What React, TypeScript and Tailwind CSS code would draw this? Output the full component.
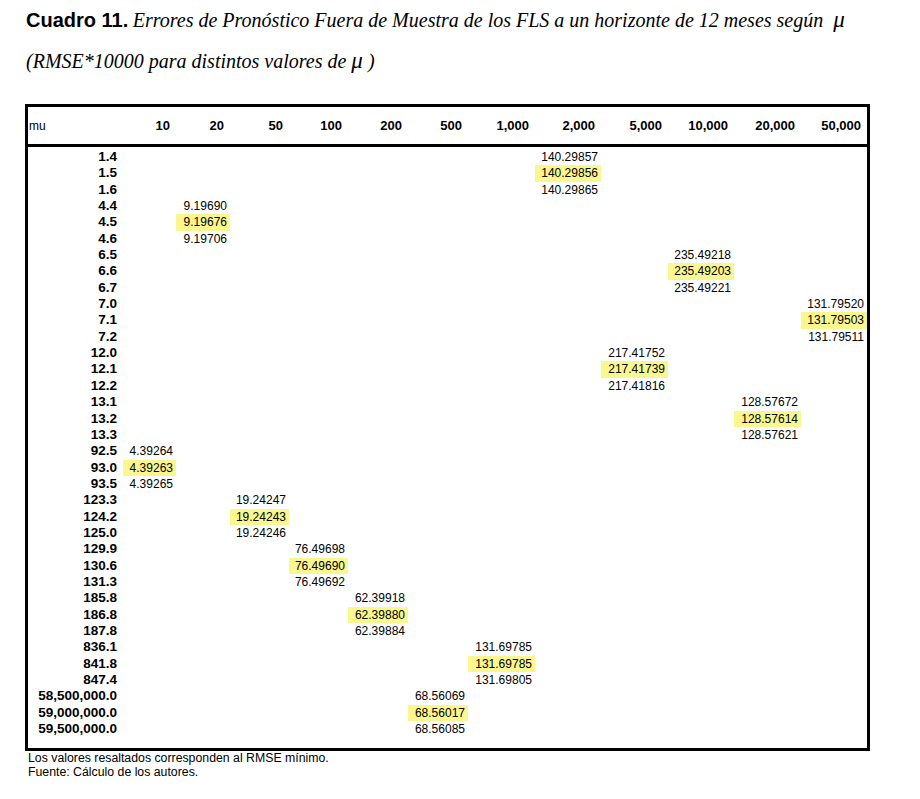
const cols = ["10", "20", "50", "100", "200", "500", "1,000", "2,000", "5,000", "10,000", "20,000", "50,000"];

// each group: three mu values, the column they fall in, and their RMSE; the middle one is the minimum
const groups: { mu: string[]; col: number; vals: string[] }[] = [
  { mu: ["1.4", "1.5", "1.6"], col: 7, vals: ["140.29857", "140.29856", "140.29865"] },
  { mu: ["4.4", "4.5", "4.6"], col: 1, vals: ["9.19690", "9.19676", "9.19706"] },
  { mu: ["6.5", "6.6", "6.7"], col: 9, vals: ["235.49218", "235.49203", "235.49221"] },
  { mu: ["7.0", "7.1", "7.2"], col: 11, vals: ["131.79520", "131.79503", "131.79511"] },
  { mu: ["12.0", "12.1", "12.2"], col: 8, vals: ["217.41752", "217.41739", "217.41816"] },
  { mu: ["13.1", "13.2", "13.3"], col: 10, vals: ["128.57672", "128.57614", "128.57621"] },
  { mu: ["92.5", "93.0", "93.5"], col: 0, vals: ["4.39264", "4.39263", "4.39265"] },
  { mu: ["123.3", "124.2", "125.0"], col: 2, vals: ["19.24247", "19.24243", "19.24246"] },
  { mu: ["129.9", "130.6", "131.3"], col: 3, vals: ["76.49698", "76.49690", "76.49692"] },
  { mu: ["185.8", "186.8", "187.8"], col: 4, vals: ["62.39918", "62.39880", "62.39884"] },
  { mu: ["836.1", "841.8", "847.4"], col: 6, vals: ["131.69785", "131.69785", "131.69805"] },
  { mu: ["58,500,000.0", "59,000,000.0", "59,500,000.0"], col: 5, vals: ["68.56069", "68.56017", "68.56085"] },
];

const rows = groups.flatMap((g) =>
  g.mu.map((m, i) => ({ mu: m, col: g.col, val: g.vals[i], min: i === 1 }))
);

const grid = "grid grid-cols-[95px_53px_54px_59px_59px_60px_60px_67px_66px_67px_66px_67px_66px]";

export default function App() {
  return (
    <div className="w-[920px] h-[799px] bg-white text-black font-['Liberation_Sans',Arial,sans-serif]">
      {/* Title */}
      <div className="pl-[26px] pt-[7px]">
        <p className="leading-[26px] whitespace-nowrap">
          <span className="font-bold text-[20px]">Cuadro 11.</span>{" "}
          <span className="font-['Liberation_Serif',serif] italic text-[20px]">
            Errores de Pronóstico Fuera de Muestra de los FLS a un horizonte de 12 meses según
          </span>
          <span className="font-['Liberation_Serif',serif] italic text-[23px] ml-[10px]">μ</span>
        </p>
        <p className="mt-[13px] leading-[26px] whitespace-nowrap font-['Liberation_Serif',serif] italic text-[20px]">
          (RMSE*10000 para distintos valores de <span className="text-[23px]">μ</span> )
        </p>
      </div>

      {/* Table */}
      <div className="ml-[25px] mt-[30px] w-[845px] border-[3px] border-black">
        <div className={`${grid} h-[40px] items-center border-b-[3px] border-black`}>
          <div className="text-[12px] pl-[1px]">mu</div>
          {cols.map((c) => (
            <div key={c} className="text-right pr-[6px] font-bold text-[13px]">
              {c}
            </div>
          ))}
        </div>
        <div className="pt-[2px] pb-[11px]">
          {rows.map((r) => (
            <div key={r.mu} className={`${grid} h-[16.35px] leading-[16.35px]`}>
              <div className="text-right pr-[6px] font-bold text-[13.5px]">{r.mu}</div>
              {cols.map((c, ci) => (
                <div
                  key={c}
                  className={
                    ci === r.col
                      ? `text-right pr-[3px] text-[12px] ${r.min ? "bg-[#faf78f]" : ""}`
                      : ""
                  }
                >
                  {ci === r.col ? r.val : null}
                </div>
              ))}
            </div>
          ))}
        </div>
      </div>

      {/* Notes */}
      <div className="pl-[28px] text-[12.3px] leading-[14px]">
        <p>Los valores resaltados corresponden al RMSE mínimo.</p>
        <p>Fuente: Cálculo de los autores.</p>
      </div>
    </div>
  );
}
